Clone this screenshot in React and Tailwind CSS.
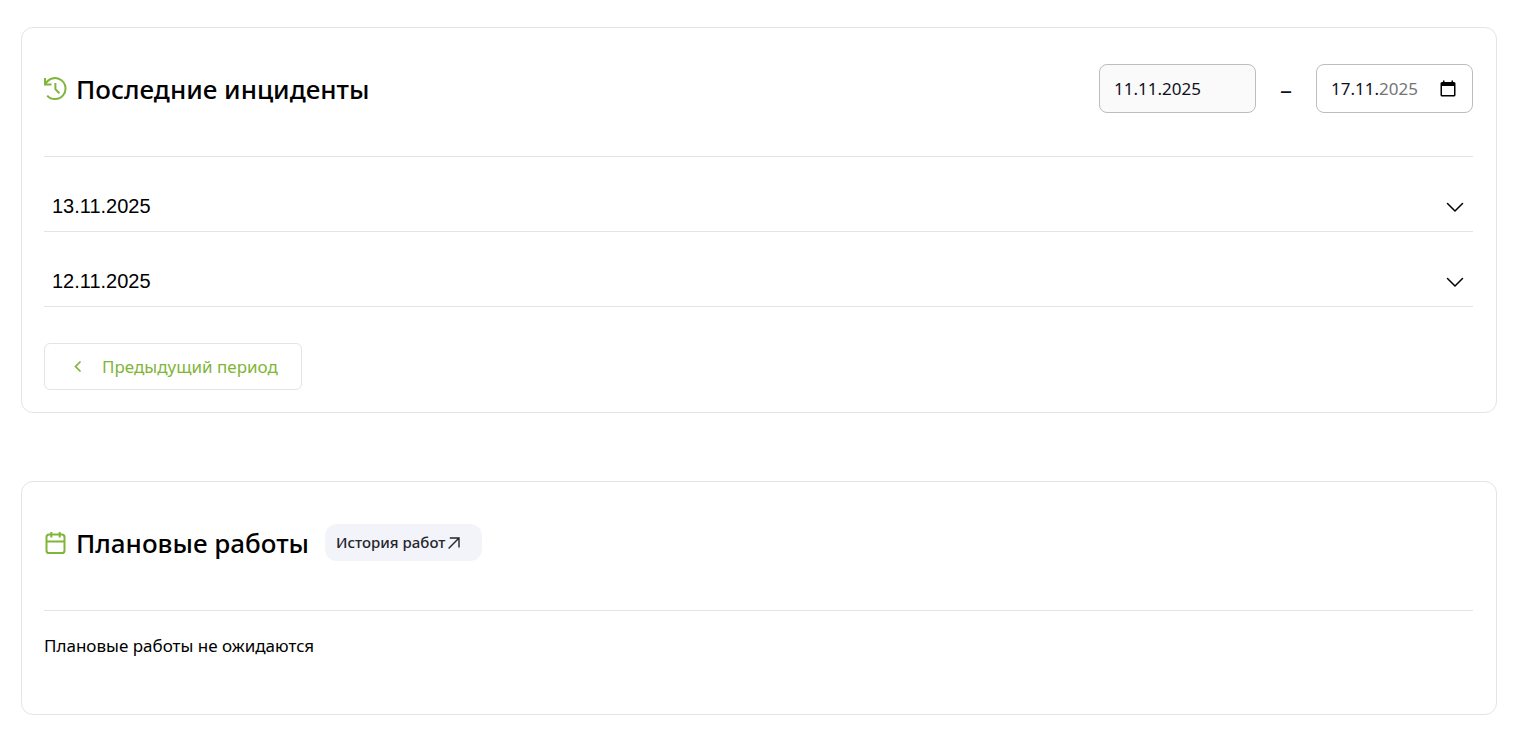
import React, { useState } from "react";

const HistoryIcon = () => (
    <svg className="size-6 shrink-0 text-[#80b539]" viewBox="0 0 24 24" fill="none" stroke="currentColor" strokeWidth="2" aria-hidden="true">
        <path d="M1 1v6.500h6.500" />
        <path d="M1.500 7.200A10.500 10.500 0 1 1 3.200 18.600" />
        <path d="M11.400 6v6.200l4 4" />
    </svg>
);

const CalendarIcon = () => (
    <svg className="size-6 shrink-0 text-[#80b539]" viewBox="0 0 24 24" fill="none" stroke="currentColor" strokeWidth="2" aria-hidden="true">
        <rect x="2.500" y="3.500" width="18" height="18.500" rx="2.600" />
        <path d="M2.500 10.500h18M7.300 1v5.400M15.700 1v5.400" />
    </svg>
);

const PickerIcon = () => (
    <svg className="h-[18px] w-4" viewBox="0 0 16 18" fill="currentColor" aria-hidden="true">
        <path d="M3 .5h1.500V2h7V.5H13V2h1a1.500 1.500 0 0 1 1.500 1.500v11.500a1.500 1.500 0 0 1-1.500 1.500H2A1.500 1.500 0 0 1 .5 15V3.500A1.500 1.500 0 0 1 2 2h1zM2 6v9h12V6z" />
    </svg>
);

const Card = ({ icon, title, extra, children }) => (
    <section className="rounded-xl border border-[#e4e4e4] pt-9 pr-[23px] pb-[22px] pl-[22px]">
        <div className="flex min-h-[93px] items-start border-b border-[#e4e4e4]">
            <div className="flex h-[50px] items-center gap-2">
                {icon}
                <h2 className="text-[26px] leading-8 font-medium">{title}</h2>
            </div>
            {extra}
        </div>
        {children}
    </section>
);

const IncidentDay = ({ date }) => (
    <li className="border-b border-[#e4e4e4]">
        <button type="button" className="flex w-full items-center justify-between px-2 pt-[34px] pb-[10px] text-left font-['Liberation_Sans',sans-serif] text-xl leading-[30px]">
            <span>{date}</span>
            <svg className="size-5" viewBox="0 0 16 16" fill="none" stroke="currentColor" strokeWidth="1.200" strokeLinecap="round" strokeLinejoin="round" aria-hidden="true">
                <path d="m2 6 6 6 6-6" />
            </svg>
        </button>
    </li>
);

const App = () => {
    const [from, setFrom] = useState("11.11.2025");
    const [day, setDay] = useState("17.11.");
    const [year, setYear] = useState("2025");

    return (
        <main className="flex flex-col gap-[68px] bg-white pt-[27px] pr-4 pb-6 pl-[21px] font-['Noto_Sans',sans-serif] text-black">
            <Card
                icon={<HistoryIcon />}
                title="Последние инциденты"
                extra={
                    <div className="ml-auto flex items-center text-[17px] text-[#10101c]">
                        <input
                            aria-label="Начало периода"
                            className="h-[49px] w-[157px] rounded-lg border border-[#bdbdbd] bg-[#fafafa] px-[14px]"
                            value={from}
                            onChange={(e) => setFrom(e.target.value)}
                        />
                        <span className="w-15 text-center text-2xl leading-8">–</span>
                        <div className="flex h-[49px] w-[157px] items-center rounded-lg border border-[#bdbdbd] pl-[14px]">
                            <input
                                aria-label="Конец периода: день и месяц"
                                className="w-12"
                                value={day}
                                onChange={(e) => setDay(e.target.value)}
                            />
                            <input
                                aria-label="Конец периода: год"
                                className="w-10 text-[#757575]"
                                value={year}
                                onChange={(e) => setYear(e.target.value)}
                            />
                            <button type="button" aria-label="Открыть календарь" className="mr-4 ml-auto text-black">
                                <PickerIcon />
                            </button>
                        </div>
                    </div>
                }
            >
                <ul>
                    <IncidentDay date="13.11.2025" />
                    <IncidentDay date="12.11.2025" />
                </ul>
                <button type="button" className="mt-9 flex h-[47px] items-center gap-[14px] rounded-md border border-[#e4e4e4] pr-[23px] pl-[23px] text-[17px] text-[#80b539]">
                    <svg className="size-5" viewBox="0 0 20 20" fill="none" stroke="currentColor" strokeWidth="1.700" aria-hidden="true">
                        <path d="m12.500 4.500-5 5 5 5" />
                    </svg>
                    Предыдущий период
                </button>
            </Card>

            <Card
                icon={<CalendarIcon />}
                title="Плановые работы"
                extra={
                    <a href="#history" className="mt-[6px] ml-4 flex h-[37px] items-center gap-[3px] rounded-xl bg-[#f3f4fa] pr-[22px] pl-[11px] text-[15px] font-medium text-[#25252d]">
                        История работ
                        <svg className="size-3" viewBox="0 0 12 12" fill="none" stroke="currentColor" strokeWidth="1.400" aria-hidden="true">
                            <path d="M.6 11.400 11 1M1.800 1H11v9.400" />
                        </svg>
                    </a>
                }
            >
                <p className="pt-[22px] pb-[33px] text-[17px] leading-[26px]">Плановые работы не ожидаются</p>
            </Card>
        </main>
    );
};

export default App;
